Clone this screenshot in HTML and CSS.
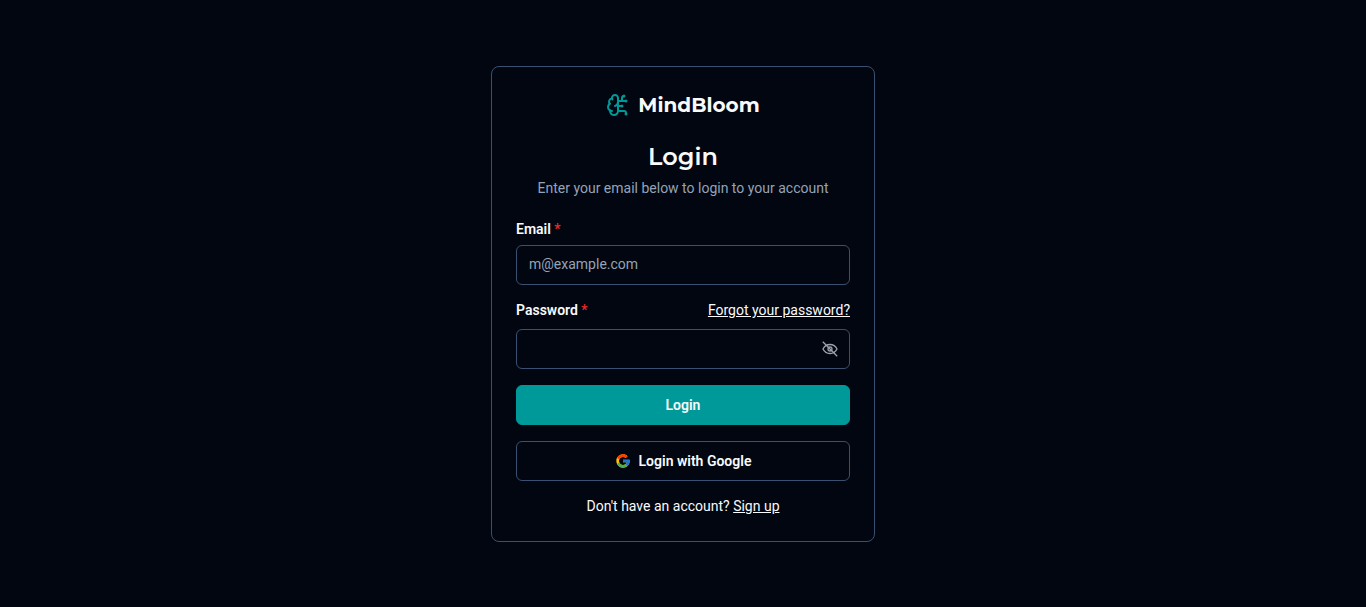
FILE: index.html
```html
<!DOCTYPE html>
<html lang="en">
<head>
<meta charset="utf-8">
<meta name="viewport" content="width=device-width, initial-scale=1">
<title>MindBloom</title>
<link rel="stylesheet" href="styles.css">
</head>
<body>
<main class="card">
  <div class="brand">
    <svg class="brand-icon" viewBox="0 0 24 24" aria-hidden="true">
      <path d="M12 5a3 3 0 1 0-5.997.125 4 4 0 0 0-2.526 5.770 4 4 0 0 0 .556 6.588A4 4 0 1 0 12 18Z"/>
      <path d="M9 13a4.500 4.500 0 0 0 3-4M6.003 5.125A3 3 0 0 0 6.401 6.500M3.477 10.896a4 4 0 0 1 .585-.396M6 18a4 4 0 0 1-1.967-.516M12 13h4M12 18h6a2 2 0 0 1 2 2v1M12 8h8M16 8V5a2 2 0 0 1 2-2"/>
      <circle cx="16" cy="13" r=".5"/><circle cx="18" cy="3" r=".5"/><circle cx="20" cy="21" r=".5"/><circle cx="20" cy="8" r=".5"/>
    </svg>
    <span class="brand-name">MindBloom</span>
  </div>
  <header class="heading">
    <h1 class="title">Login</h1>
    <p class="subtitle">Enter your email below to login to your account</p>
  </header>
  <form class="form">
    <div class="field">
      <label class="label" for="email">Email <span class="required">*</span></label>
      <input class="input" id="email" type="email" placeholder="m@example.com">
    </div>
    <div class="field">
      <div class="label-row">
        <label class="label" for="password">Password <span class="required">*</span></label>
        <a class="link" href="#">Forgot your password?</a>
      </div>
      <div class="password-box">
        <input class="input" id="password" type="password">
        <button class="toggle" type="button" aria-label="Show password">
          <svg class="eye" viewBox="0 0 16 16" aria-hidden="true">
            <path d="M1 8C2.500 5 5 3.500 8 3.500S13.500 5 15 8C13.500 11 11 12.500 8 12.500S2.500 11 1 8Z"/>
            <circle cx="8" cy="8" r="2"/>
            <path d="M.8.800 15.200 15.200"/>
          </svg>
        </button>
      </div>
    </div>
    <button class="button primary" type="submit">Login</button>
    <button class="button" type="button">
      <svg class="google" viewBox="0 0 48 48" aria-hidden="true">
        <path fill="#ffc107" d="M43.611 20.083H42V20H24v8h11.303c-1.649 4.657-6.080 8-11.303 8-6.627 0-12-5.373-12-12s5.373-12 12-12c3.059 0 5.842 1.154 7.961 3.039l5.657-5.657C34.046 6.053 29.268 4 24 4 12.955 4 4 12.955 4 24s8.955 20 20 20 20-8.955 20-20c0-1.341-.138-2.650-.389-3.917z"/>
        <path fill="#ff3d00" d="m6.306 14.691 6.571 4.819C14.655 15.108 18.961 12 24 12c3.059 0 5.842 1.154 7.961 3.039l5.657-5.657C34.046 6.053 29.268 4 24 4 16.318 4 9.656 8.337 6.306 14.691z"/>
        <path fill="#4caf50" d="M24 44c5.166 0 9.860-1.977 13.409-5.192l-6.190-5.238A11.910 11.910 0 0 1 24 36c-5.202 0-9.619-3.317-11.283-7.946l-6.522 5.025C9.505 39.556 16.227 44 24 44z"/>
        <path fill="#1976d2" d="M43.611 20.083H42V20H24v8h11.303a12.040 12.040 0 0 1-4.087 5.571l6.193 5.237C36.971 39.205 44 34 44 24c0-1.341-.138-2.650-.389-3.917z"/>
      </svg>
      Login with Google
    </button>
  </form>
  <p class="signup">Don't have an account? <a class="link" href="#">Sign up</a></p>
</main>
</body>
</html>
```
FILE: styles.css
```css
* { box-sizing: border-box; }

body {
  margin: 0;
  min-height: 100vh;
  display: flex;
  align-items: center;
  justify-content: center;
  background: #020610;
  color: #f8fafc;
  font: 400 14px/20px Roboto, sans-serif;
}

.card {
  width: 100%;
  max-width: 384px;
  padding: 24px;
  border: 1px solid #3a5070;
  border-radius: 8px;
}

.brand {
  display: flex;
  align-items: center;
  justify-content: center;
  gap: 8px;
  height: 28px;
}

.brand-icon {
  width: 24px;
  height: 24px;
  fill: none;
  stroke: #009999;
  stroke-width: 2;
  stroke-linecap: round;
  stroke-linejoin: round;
}

.brand-name, .title {
  font-family: Montserrat, Inter, sans-serif;
}

.brand-name { font-size: 20px; line-height: 28px; font-weight: 700; }

.heading { margin-top: 20px; text-align: center; }

.title { margin: 0; font-size: 24px; line-height: 36px; font-weight: 600; }

.subtitle { margin: 3px 0 0; color: #94a3b8; }

.form { display: grid; gap: 16px; margin-top: 24px; }

.field { display: grid; gap: 9px; }

.label { font-weight: 600; line-height: 14px; }

.required { color: #e62b2b; }

.label-row { display: flex; align-items: center; justify-content: space-between; height: 19px; }

.link { color: inherit; text-decoration: underline; }

.password-box { position: relative; }

.input {
  display: block;
  width: 100%;
  height: 40px;
  padding: 8px 12px 10px;
  border: 1px solid #3a5070;
  border-radius: 6px;
  background: transparent;
  color: inherit;
  font: inherit;
}

.input::placeholder { color: #94a3b8; opacity: 1; }

.toggle {
  position: absolute;
  top: 0;
  right: 0;
  display: flex;
  align-items: center;
  height: 40px;
  padding: 0 12px;
  border: 0;
  background: none;
  color: #9ca3af;
}

.eye { width: 16px; height: 16px; fill: none; stroke: currentColor; stroke-width: 1.3; }

.button {
  display: flex;
  align-items: center;
  justify-content: center;
  gap: 8px;
  height: 40px;
  border: 1px solid #3a5070;
  border-radius: 6px;
  background: transparent;
  color: inherit;
  font: inherit;
  font-weight: 600;
}

.primary { border-color: #009999; background: #009999; }

.google { width: 16px; height: 16px; }

.signup { margin: 15px 0 1px; text-align: center; }
```
